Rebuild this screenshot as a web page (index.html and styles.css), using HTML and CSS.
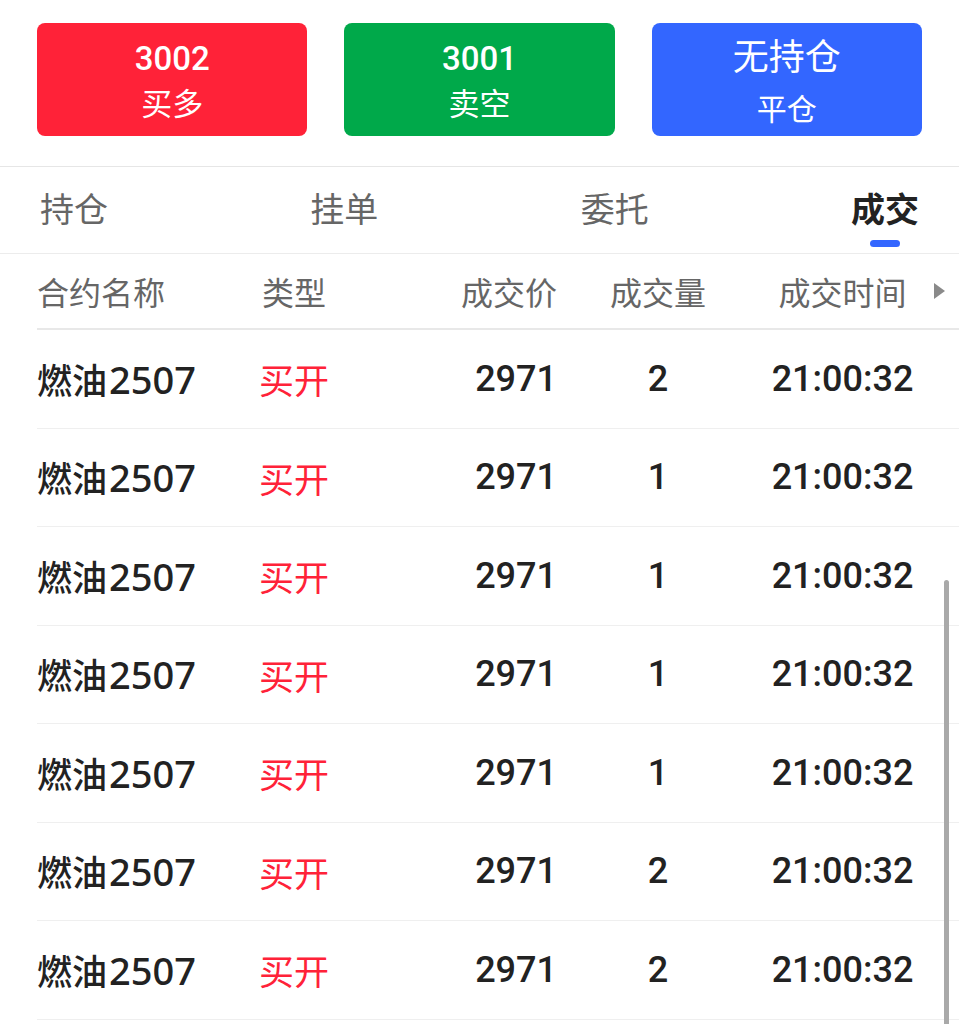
FILE: index.html
```html
<!DOCTYPE html>
<html lang="zh-CN">
<head>
    <meta charset="UTF-8">
    <meta name="viewport" content="width=device-width, initial-scale=1.0">
    <title>成交</title>
    <link rel="stylesheet" href="styles.css">
</head>
<body>
    <div class="actions">
        <button class="act act-buy">
            <span class="act-price">3002</span>
            <span class="act-label">买多</span>
        </button>
        <button class="act act-sell">
            <span class="act-price">3001</span>
            <span class="act-label">卖空</span>
        </button>
        <button class="act act-close">
            <span class="act-title">无持仓</span>
            <span class="act-label act-label-low">平仓</span>
        </button>
    </div>

    <div class="tabs">
        <div class="tab">持仓</div>
        <div class="tab">挂单</div>
        <div class="tab">委托</div>
        <div class="tab active">成交</div>
    </div>

    <div class="table">
        <div class="row head">
            <div class="c-name">合约名称</div>
            <div class="c-type">类型</div>
            <div class="c-price">成交价</div>
            <div class="c-qty">成交量</div>
            <div class="c-time">成交时间</div>
            <div class="c-more"><span class="more-arrow"></span></div>
        </div>
        <div class="row">
            <div class="c-name">燃油<span class="code">2507</span></div>
            <div class="c-type buy">买开</div>
            <div class="c-price num">2971</div>
            <div class="c-qty num">2</div>
            <div class="c-time num">21:00:32</div>
        </div>
        <div class="row">
            <div class="c-name">燃油<span class="code">2507</span></div>
            <div class="c-type buy">买开</div>
            <div class="c-price num">2971</div>
            <div class="c-qty num">1</div>
            <div class="c-time num">21:00:32</div>
        </div>
        <div class="row">
            <div class="c-name">燃油<span class="code">2507</span></div>
            <div class="c-type buy">买开</div>
            <div class="c-price num">2971</div>
            <div class="c-qty num">1</div>
            <div class="c-time num">21:00:32</div>
        </div>
        <div class="row">
            <div class="c-name">燃油<span class="code">2507</span></div>
            <div class="c-type buy">买开</div>
            <div class="c-price num">2971</div>
            <div class="c-qty num">1</div>
            <div class="c-time num">21:00:32</div>
        </div>
        <div class="row">
            <div class="c-name">燃油<span class="code">2507</span></div>
            <div class="c-type buy">买开</div>
            <div class="c-price num">2971</div>
            <div class="c-qty num">1</div>
            <div class="c-time num">21:00:32</div>
        </div>
        <div class="row">
            <div class="c-name">燃油<span class="code">2507</span></div>
            <div class="c-type buy">买开</div>
            <div class="c-price num">2971</div>
            <div class="c-qty num">2</div>
            <div class="c-time num">21:00:32</div>
        </div>
        <div class="row">
            <div class="c-name">燃油<span class="code">2507</span></div>
            <div class="c-type buy">买开</div>
            <div class="c-price num">2971</div>
            <div class="c-qty num">2</div>
            <div class="c-time num">21:00:32</div>
        </div>
    </div>

    <div class="scrollbar"></div>
</body>
</html>
```

FILE: styles.css
```css
html, body {
    margin: 0;
    padding: 0;
    background: #fff;
    overflow: hidden;
}
body {
    font-family: "Noto Sans CJK SC", "Noto Sans", sans-serif;
    color: #222;
    height: 1024px;
}

/* top buttons */
.actions {
    display: flex;
    gap: 37px;
    padding: 23px 37px 30px;
    height: 113px;
    border-bottom: 1px solid #e6e6e6;
}
.act {
    flex: 1;
    height: 113px;
    border: none;
    border-radius: 8px;
    color: #fff;
    display: flex;
    flex-direction: column;
    align-items: center;
    justify-content: center;
    font-family: inherit;
    padding: 0;
}
.act-buy {
    background: #ff2238;
}
.act-sell {
    background: #00a94a;
}
.act-close {
    background: #3366ff;
}
.act-price {
    font-family: Roboto, "Noto Sans", sans-serif;
    font-size: 33px;
    font-weight: 500;
    line-height: 44px;
}
.act-label {
    font-size: 31px;
    line-height: 42px;
}
.act-title {
    font-size: 36px;
    line-height: 54px;
}
.act-label-low {
    font-size: 30px;
    line-height: 52px;
}

/* tabs */
.tabs {
    display: flex;
    justify-content: space-between;
    padding: 0 40px 0 40px;
    height: 86px;
    border-bottom: 1px solid #ececec;
}
.tab {
    position: relative;
    font-size: 34px;
    color: #666;
    line-height: 86px;
    margin-top: -2px;
}
.tab.active {
    color: #222;
    font-weight: 700;
}
.tab.active::after {
    content: "";
    position: absolute;
    left: 50%;
    bottom: 6px;
    width: 30px;
    height: 7px;
    margin-left: -15px;
    border-radius: 4px;
    background: #3366ff;
}

/* table */
.table {
    margin-left: 37px;
}
.row {
    display: grid;
    grid-template-columns: 222px 141px 157px 202px 167px 1fr;
    align-items: center;
    height: 97.5px;
    border-bottom: 1px solid #efefef;
}
.row.head {
    height: 74px;
    border-bottom: 2px solid #e8e8e8;
    font-size: 32px;
    color: #666;
}
.c-name {
    font-size: 35px;
    font-weight: 500;
}
.code {
    font-family: "Noto Sans", sans-serif;
    font-size: 38px;
    margin-left: 2px;
}
.head .c-name {
    font-size: 32px;
    font-weight: 400;
}
.c-type {
    font-size: 35px;
}
.head .c-type {
    font-size: 32px;
    margin-left: 3px;
}
.buy {
    color: #ff2238;
}
.c-price {
    text-align: right;
}
.c-qty, .c-time {
    text-align: center;
}
.num {
    font-family: Roboto, "Noto Sans", sans-serif;
    font-size: 36px;
    font-weight: 500;
    color: #222;
}
.c-more {
    padding-left: 8px;
    display: flex;
    align-items: center;
}
.more-arrow {
    width: 0;
    height: 0;
    border-top: 8px solid transparent;
    border-bottom: 8px solid transparent;
    border-left: 11px solid #8a8a8a;
}

.scrollbar {
    position: absolute;
    left: 944px;
    top: 580px;
    width: 5px;
    height: 460px;
    border-radius: 3px;
    background: #a9a9a9;
}
```
